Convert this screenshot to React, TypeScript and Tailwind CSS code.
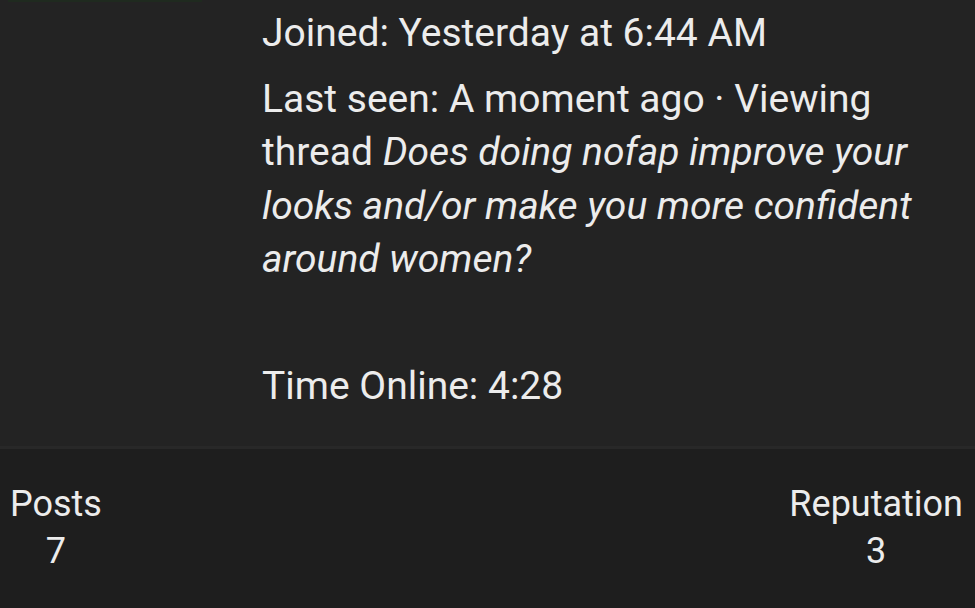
import React from 'react';

const stats = [
  { label: 'Posts', value: '7' },
  { label: 'Reputation', value: '3' },
];

const App: React.FC = () => {
  return (
    <div className="w-[975px] h-[608px] overflow-hidden bg-[#1e1e1e] text-[#ececec] font-['Roboto',sans-serif] text-[39px]">
      {/* Profile details */}
      <div className="relative bg-[#232323] pl-[262px] pr-3 pt-[7px] pb-[32px] border-b-[3px] border-[#282828]">
        <div className="absolute left-[8px] top-0 w-[194px] h-[2px] bg-[#1f2a1f]" />
        <p className="leading-[53.6px]">Joined: Yesterday at 6:44 AM</p>
        <p className="mt-[12px] leading-[53.6px]">
          Last seen: A moment ago · Viewing thread{' '}
          <em className="italic">Does doing nofap improve your looks and/or make you more confident around women?</em>
        </p>
        <p className="mt-[73px] leading-[53.6px]">Time Online: 4:28</p>
      </div>

      {/* Stats */}
      <div className="flex justify-between pl-[10px] pr-[12px] pt-[32px] text-[36px]">
        {stats.map((s) => (
          <div key={s.label} className="flex flex-col items-center leading-[47px]">
            <span>{s.label}</span>
            <span>{s.value}</span>
          </div>
        ))}
      </div>
    </div>
  );
};

export default App;
